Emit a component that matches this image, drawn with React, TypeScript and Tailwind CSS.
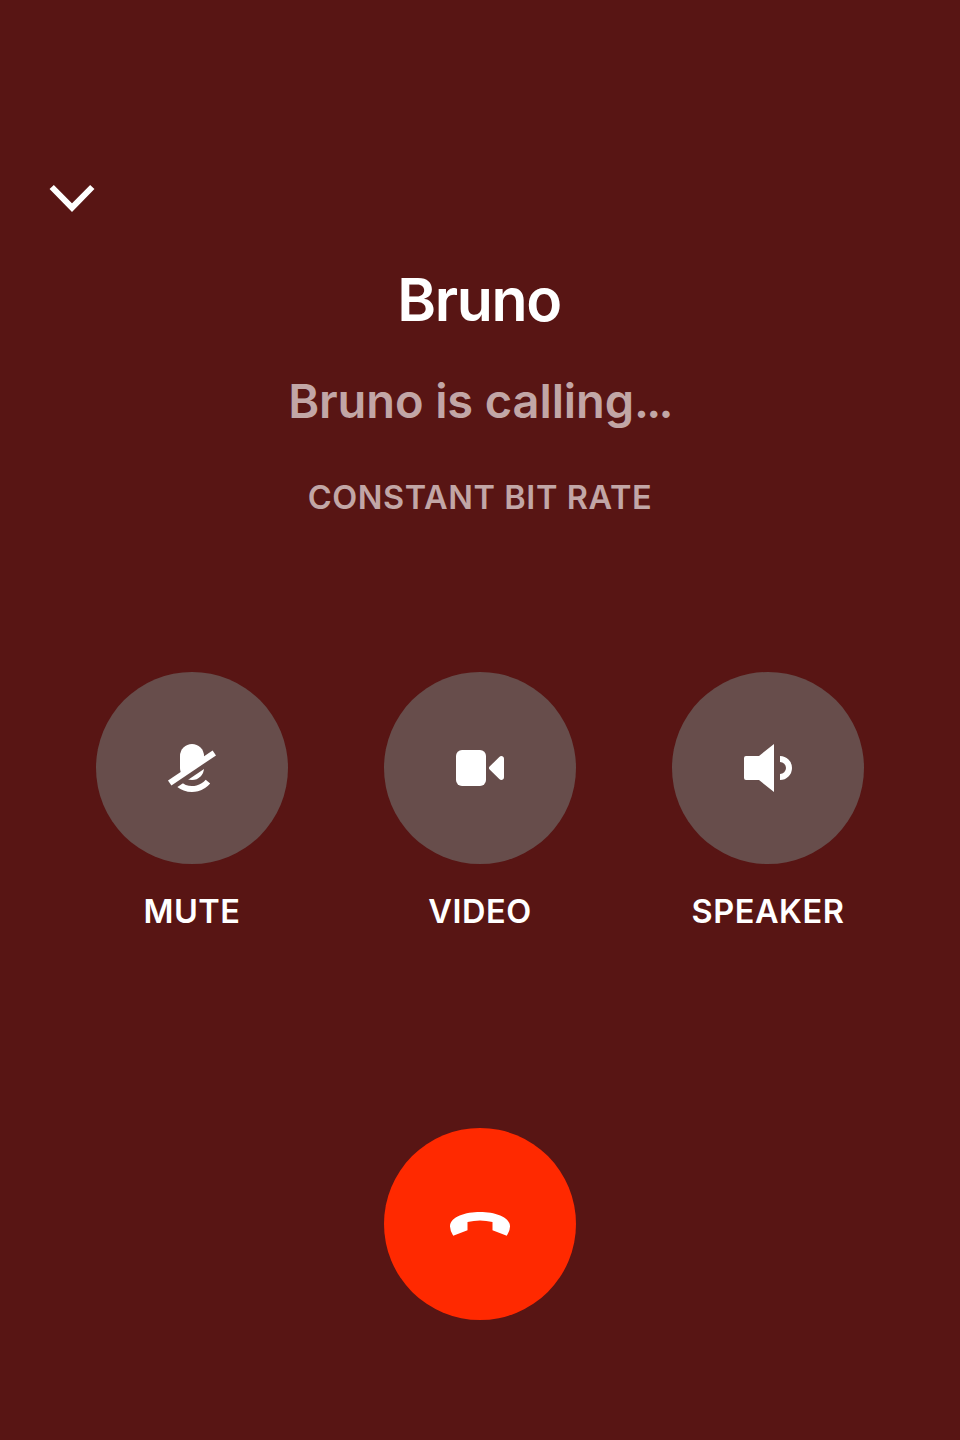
import type { ReactNode } from "react";

function MuteIcon() {
  return (
    <svg viewBox="0 0 64 64" className="size-16" fill="currentColor">
      <defs>
        <clipPath id="below">
          <path d="M0 62.8 L64 19.5 V64 H0 Z" />
        </clipPath>
        <clipPath id="above">
          <path d="M0 0 H64 V12 L0 55 Z" />
        </clipPath>
      </defs>
      <path clipPath="url(#above)" d="M20 20a12 12 0 0 1 24 0v12a12 12 0 0 1-24 0z" />
      <path d="M8 44.6 L52.6 14.5 L56 19.4 L11.4 49.5 Z" />
      <g clipPath="url(#below)">
        <path d="M20 20a12 12 0 0 1 24 0v12a12 12 0 0 1-24 0z" />
        <path d="M45.7 43.7 L50.2 47.6 A24 24 0 0 1 8 32 H14 A18 18 0 0 0 45.7 43.7 Z" />
      </g>
    </svg>
  );
}

function VideoIcon() {
  return (
    <svg viewBox="0 0 64 64" className="size-16" fill="currentColor">
      <rect x="8" y="14" width="30" height="36" rx="6" />
      <path d="M41.6 30.6 L51.3 20.9 C53 19.2 56 20.1 56 22.8 V41.2 C56 43.9 53 44.8 51.3 43.1 L41.6 33.4 Q40.2 32 41.6 30.6 Z" />
    </svg>
  );
}

function SpeakerIcon() {
  return (
    <svg viewBox="0 0 64 64" className="size-16" fill="currentColor">
      <path d="M10 20 H23 L38 8 V56 L23 44 H10 Q8 44 8 42 V22 Q8 20 10 20 Z" />
      <path d="M44 20 A12 12 0 0 1 44 44 V38 A6 6 0 0 0 44 26 Z" />
    </svg>
  );
}

function HangUpIcon() {
  return (
    <svg viewBox="0 0 80 56" className="h-14 w-20" fill="currentColor">
      <path d="M13.2 39.7 L27.5 34.3 V26 Q40 22.9 52.5 26 V34.3 L66.8 39.7 Q69.8 35.5 70 30.5 C70 20.5 54 16 40 16 C26 16 10 20.5 10 30.5 Q10.2 35.5 13.2 39.7 Z" />
    </svg>
  );
}

function Control({ label, children }: { label: string; children: ReactNode }) {
  return (
    <button className="flex w-48 flex-col items-center">
      <span className="flex size-48 items-center justify-center rounded-full bg-[#674d4b]">{children}</span>
      <span className="mt-7 text-[32.5px] leading-10 font-semibold tracking-[0.55px] whitespace-nowrap">{label}</span>
    </button>
  );
}

export default function App() {
  return (
    <main className="flex h-[1440px] w-[960px] flex-col bg-[#581514] font-['Inter',sans-serif] text-white">
      <header className="flex h-[226px] items-end pl-10">
        <button aria-label="Minimize call">
          <svg viewBox="0 0 64 56" className="block h-14 w-16" fill="none" stroke="currentColor" strokeWidth="6">
            <path d="M11.7 17 L32 37.7 L52.3 17" />
          </svg>
        </button>
      </header>
      <section className="flex flex-col items-center pt-[38px]">
        <h1 className="pr-[2px] text-[59px] leading-[72px] font-semibold tracking-[-1.4px]">Bruno</h1>
        <p className="mt-[35px] pr-px text-[47px] leading-[60px] font-semibold tracking-[-0.1px] text-[#c2a6a6]">
          Bruno is calling<span className="tracking-[-2.7px]">...</span>
        </p>
        <p className="mt-[47px] text-[32.5px] leading-10 font-semibold tracking-[0.6px] text-[#c2a6a6]">CONSTANT BIT RATE</p>
      </section>
      <section className="mt-[154px] flex justify-center gap-24">
        <Control label="MUTE"><MuteIcon /></Control>
        <Control label="VIDEO"><VideoIcon /></Control>
        <Control label="SPEAKER"><SpeakerIcon /></Control>
      </section>
      <button aria-label="End call" className="mt-[196px] flex size-48 items-center justify-center self-center rounded-full bg-[#ff2900]">
        <HangUpIcon />
      </button>
    </main>
  );
}
